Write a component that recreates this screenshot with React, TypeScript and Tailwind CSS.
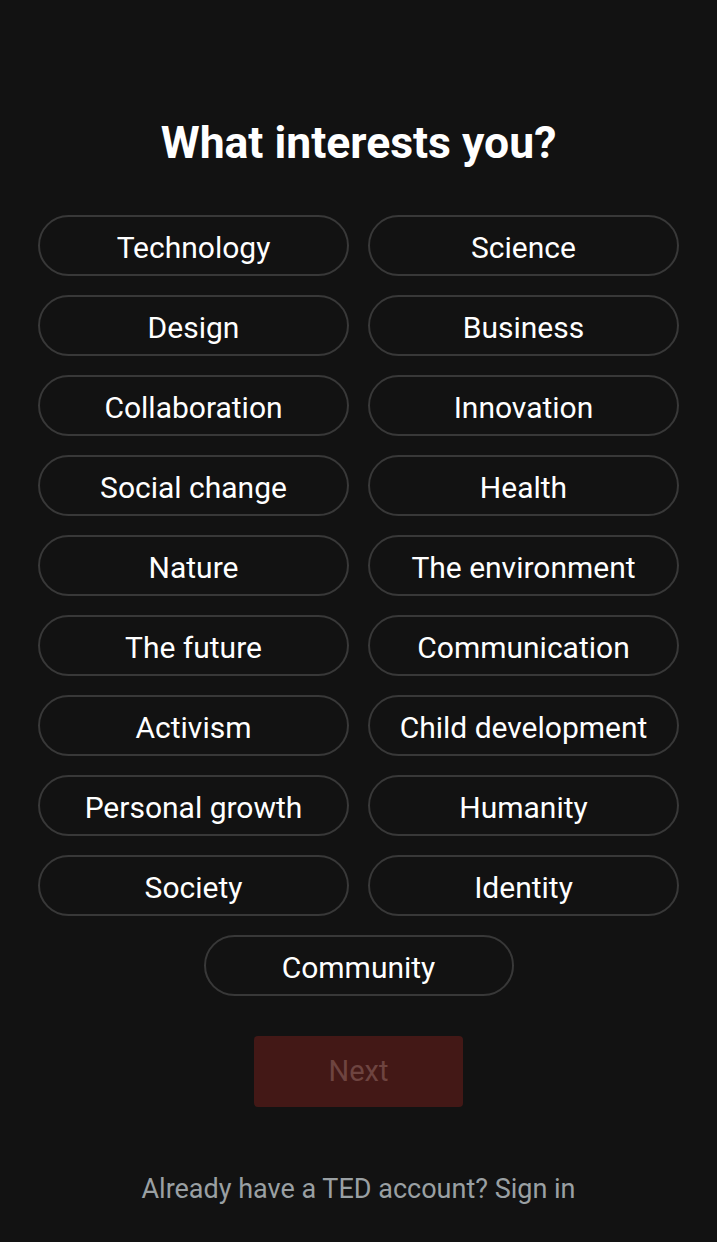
import { useState } from "react";

const topics = [
  "Technology",
  "Science",
  "Design",
  "Business",
  "Collaboration",
  "Innovation",
  "Social change",
  "Health",
  "Nature",
  "The environment",
  "The future",
  "Communication",
  "Activism",
  "Child development",
  "Personal growth",
  "Humanity",
  "Society",
  "Identity",
];

function Pill({
  label,
  selected,
  onClick,
}: {
  label: string;
  selected: boolean;
  onClick: () => void;
}) {
  return (
    <button
      onClick={onClick}
      className={
        "h-[61px] w-full rounded-full border-2 pt-[4px] text-[30px] leading-none text-white " +
        (selected ? "border-[#e62b1e] bg-[#2a1312]" : "border-[#383838] bg-transparent")
      }
    >
      {label}
    </button>
  );
}

export default function App() {
  const [picked, setPicked] = useState<string[]>([]);

  const toggle = (t: string) =>
    setPicked((prev) => (prev.includes(t) ? prev.filter((x) => x !== t) : [...prev, t]));

  return (
    <div
      className="flex min-h-[1242px] flex-col items-center bg-[#121212] px-[38px]"
      style={{ fontFamily: "Roboto, 'Liberation Sans', sans-serif" }}
    >
      <h1 className="mt-[116px] text-[44.5px] font-bold leading-[54px] text-white">
        What interests you?
      </h1>
      <div className="mt-[45px] grid w-full grid-cols-2 gap-x-[19px] gap-y-[19px]">
        {topics.map((t) => (
          <Pill key={t} label={t} selected={picked.includes(t)} onClick={() => toggle(t)} />
        ))}
      </div>
      <div className="mt-[19px] w-[310px]">
        <Pill
          label="Community"
          selected={picked.includes("Community")}
          onClick={() => toggle("Community")}
        />
      </div>
      <button
        disabled={picked.length === 0}
        className="mt-[40px] h-[71px] w-[209px] rounded-[4px] bg-[#431816] text-[29px] text-[#6e4440]"
      >
        Next
      </button>
      <p className="mt-[62px] text-[27px] text-[#9aa0a3]">
        Already have a TED account? Sign in
      </p>
    </div>
  );
}
